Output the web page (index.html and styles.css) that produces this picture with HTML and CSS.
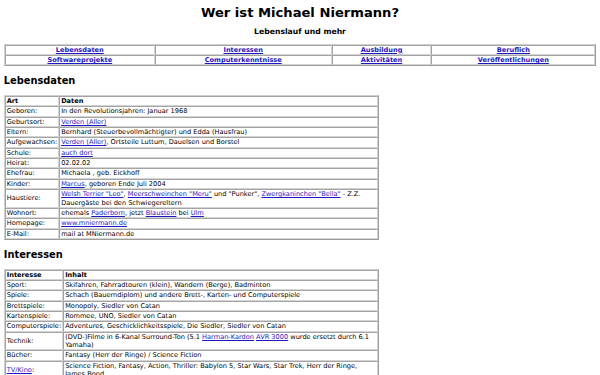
FILE: index.html
```html
<!DOCTYPE html>
<html lang="de">
<head>
<meta charset="utf-8">
<title>Wer ist Michael Niermann?</title>
<link rel="stylesheet" href="styles.css">
</head>
<body>
<h1 class="title">Wer ist Michael Niermann?</h1>
<h3 class="subtitle">Lebenslauf und mehr</h3>

<table class="grid nav">
  <tr>
    <td><a href="#lebensdaten">Lebensdaten</a></td>
    <td><a href="#interessen">Interessen</a></td>
    <td><a href="#ausbildung">Ausbildung</a></td>
    <td><a href="#beruflich">Beruflich</a></td>
  </tr>
  <tr>
    <td><a href="#software">Softwareprojekte</a></td>
    <td><a href="#computer">Computerkenntnisse</a></td>
    <td><a href="#aktivitaeten">Aktivitäten</a></td>
    <td><a href="#veroeffentlichungen">Veröffentlichungen</a></td>
  </tr>
</table>

<h2 class="section" id="lebensdaten">Lebensdaten</h2>
<table class="grid data">
  <tr><th>Art</th><th>Daten</th></tr>
  <tr><td>Geboren:</td><td>In den Revolutionsjahren: Januar 1968</td></tr>
  <tr><td>Geburtsort:</td><td><a href="#">Verden (Aller)</a></td></tr>
  <tr><td>Eltern:</td><td>Bernhard (Steuerbevollmächtigter) und Edda (Hausfrau)</td></tr>
  <tr><td>Aufgewachsen:</td><td><a href="#">Verden (Aller)</a>, Ortsteile Luttum, Dauelsen und Borstel</td></tr>
  <tr><td>Schule:</td><td><a href="#">auch dort</a></td></tr>
  <tr><td>Heirat:</td><td>02.02.02</td></tr>
  <tr><td>Ehefrau:</td><td>Michaela , geb. Eickhoff</td></tr>
  <tr><td>Kinder:</td><td><a href="#">Marcus</a>, geboren Ende Juli 2004</td></tr>
  <tr><td>Haustiere:</td><td><a href="#">Welsh Terrier &quot;Leo&quot;</a>, <a href="#">Meerschweinchen &quot;Meru&quot;</a> und &quot;Punker&quot;, <a href="#">Zwergkaninchen &quot;Bella&quot;</a> - Z.Z. Dauergäste bei den Schwiegereltern</td></tr>
  <tr><td>Wohnort:</td><td>ehemals <a href="#">Paderborn</a>, jetzt <a href="#">Blaustein</a> bei <a href="#">Ulm</a></td></tr>
  <tr><td>Homepage:</td><td><a href="#">www.mniermann.de</a></td></tr>
  <tr><td>E-Mail:</td><td>mail at MNiermann.de</td></tr>
</table>

<h2 class="section" id="interessen">Interessen</h2>
<table class="grid data">
  <tr><th>Interesse</th><th>Inhalt</th></tr>
  <tr><td>Sport:</td><td>Skifahren, Fahrradtouren (klein), Wandern (Berge), Badminton</td></tr>
  <tr><td>Spiele:</td><td>Schach (Bauerndiplom) und andere Brett-, Karten- und Computerspiele</td></tr>
  <tr><td>Brettspiele:</td><td>Monopoly, Siedler von Catan</td></tr>
  <tr><td>Kartenspiele:</td><td>Rommee, UNO, Siedler von Catan</td></tr>
  <tr><td>Computerspiele:</td><td>Adventures, Geschicklichkeitsspiele, Die Siedler, Siedler von Catan</td></tr>
  <tr><td>Technik:</td><td>(DVD-)Filme in 6-Kanal Surround-Ton (5.1 <a href="#">Harman-Kardon</a> <a href="#">AVR 3000</a> wurde ersetzt durch 6.1 Yamaha)</td></tr>
  <tr><td>Bücher:</td><td>Fantasy (Herr der Ringe) / Science Fiction</td></tr>
  <tr><td><a href="#">TV/Kino</a>:</td><td>Science Fiction, Fantasy, Action, Thriller: Babylon 5, Star Wars, Star Trek, Herr der Ringe, James Bond</td></tr>
</table>
</body>
</html>
```

FILE: styles.css
```css
body {
  margin: 0 3.75px 4px;
  font-family: "DejaVu Sans", Verdana, sans-serif;
  font-size: 6.6px;
  color: #000;
  background: #fff;
}

a {
  color: #1e18c4;
}

.title {
  font-size: 13.125px;
  text-align: center;
  margin: 4.7px 0 0;
}

.subtitle {
  font-size: 7.7px;
  text-align: center;
  margin: 7.5px 0 7.5px;
}

.section {
  font-size: 9.85px;
  margin: 8.9px 0 8.8px;
}

.grid {
  border-collapse: separate;
  border-spacing: 0;
  border: 1px solid;
  border-color: #cfcfcf #9c9c9c #9c9c9c #cfcfcf;
}

.grid td,
.grid th {
  border: 1px solid;
  border-color: #a4a4a4 #d4d4d4 #d4d4d4 #a4a4a4;
  padding: 0 1px;
  line-height: 8.35px;
}

.grid th {
  text-align: left;
}

.nav {
  width: 100%;
}

.nav td {
  text-align: center;
  font-weight: bold;
}

.data {
  width: 375px;
  margin-bottom: 3.5px;
}
```
